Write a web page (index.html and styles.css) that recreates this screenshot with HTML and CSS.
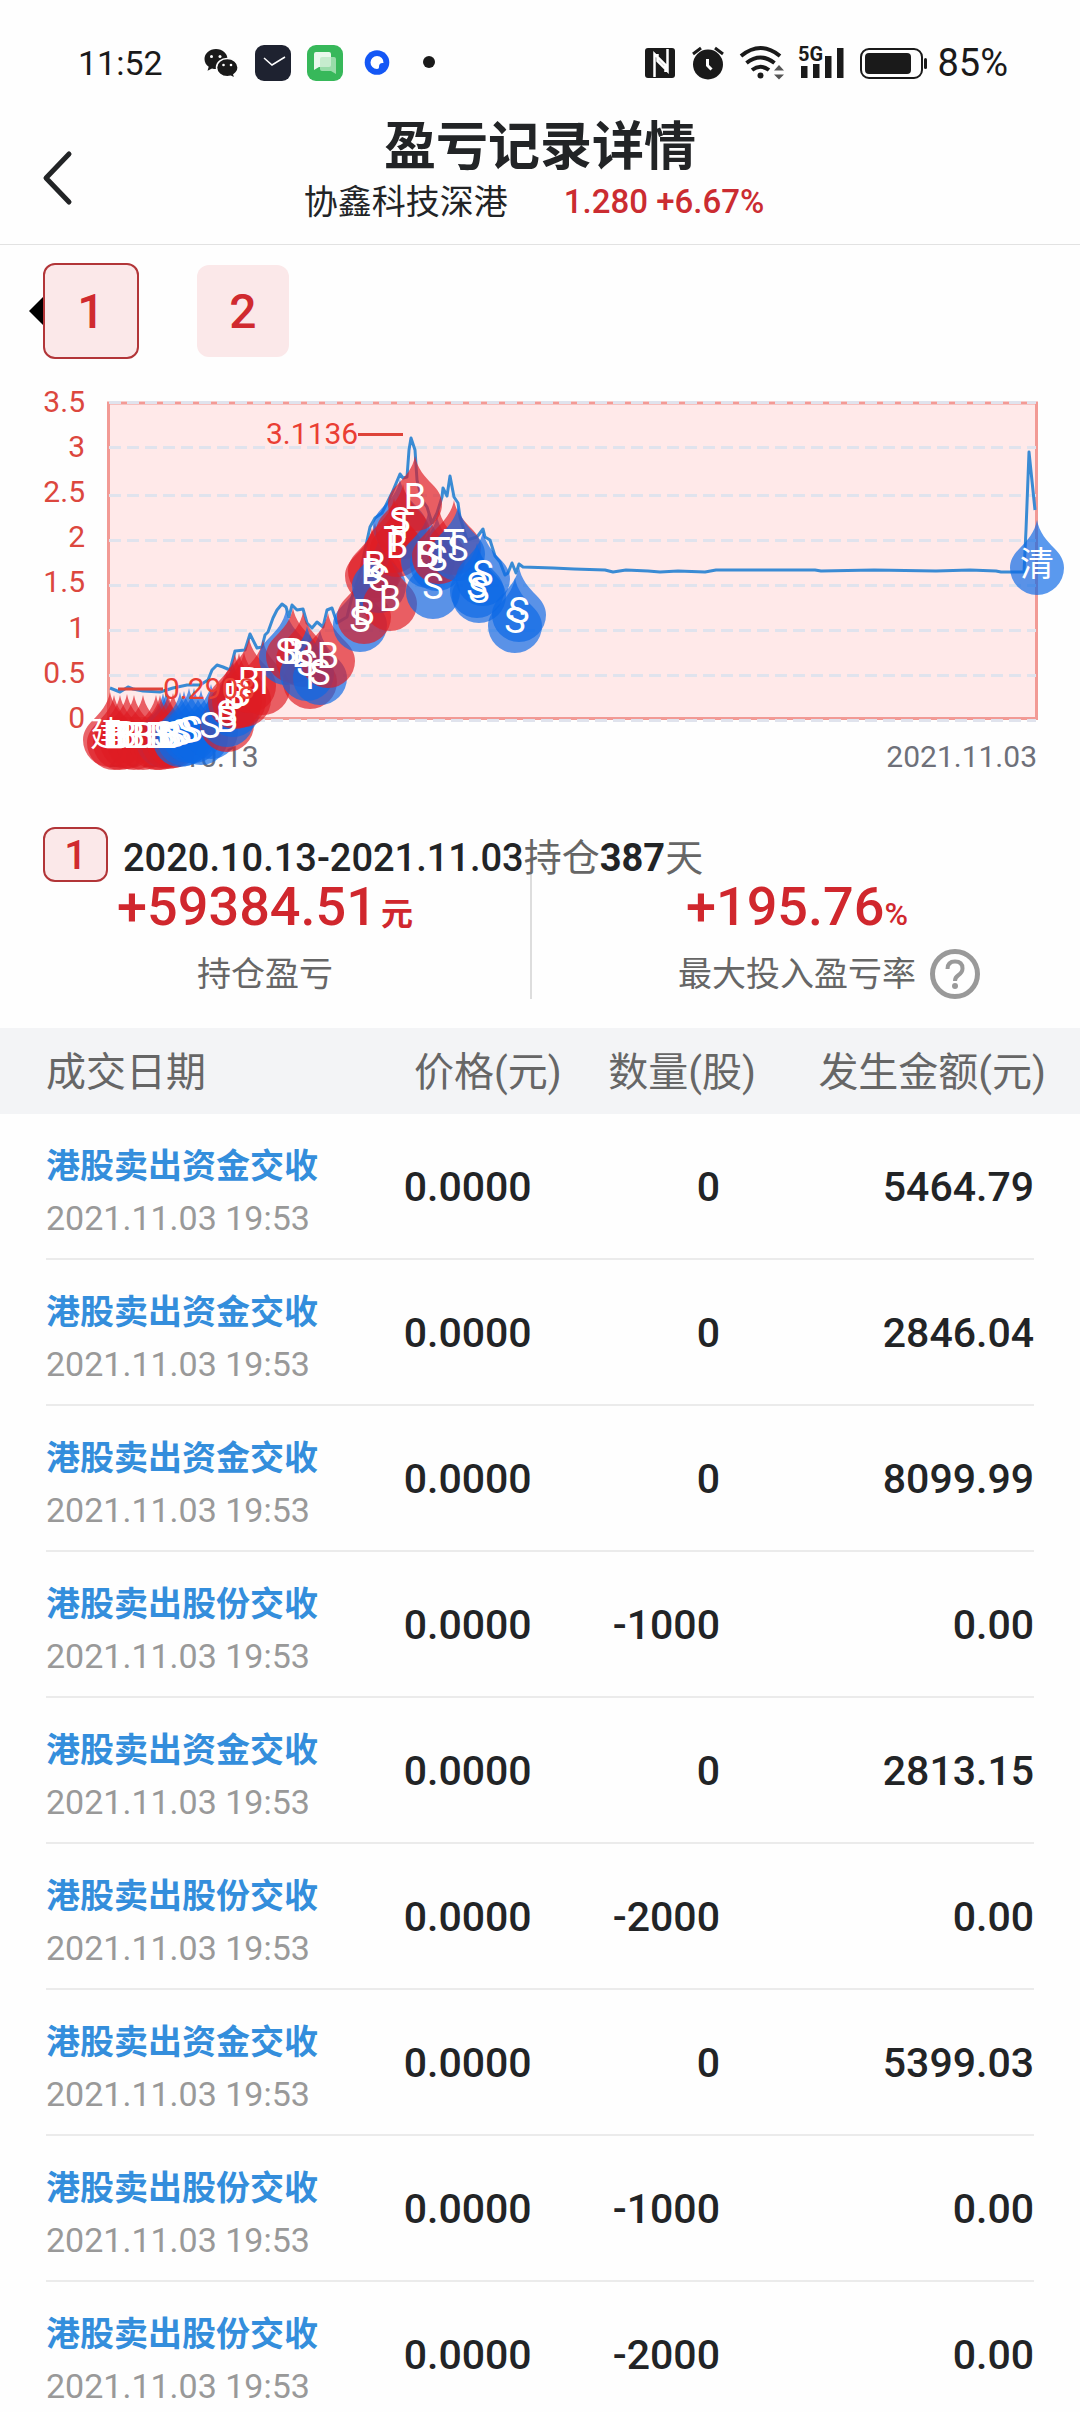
FILE: index.html
```html
<!DOCTYPE html>
<html lang="zh-CN">
<head>
<meta charset="utf-8">
<meta name="viewport" content="width=device-width, initial-scale=1">
<title>盈亏记录详情</title>
<link rel="stylesheet" href="styles.css">
</head>
<body>
<div class="app">
  <div class="status">
    <span class="clock">11:52</span>
    <svg class="status-apps" width="232" height="36" viewBox="204 45 232 36" aria-hidden="true">
      <g fill="#1a1a1a">
        <path d="M216 49c-6.500 0-11.500 4.500-11.500 10 0 3.200 1.600 6 4.200 7.800l-1.200 4 4.500-2.300c1.300.4 2.600.6 4 .6 6.500 0 11.500-4.600 11.500-10.100S222.500 49 216 49z"/>
        <path stroke="#fff" stroke-width="1.500" d="M227.300 58.500c-6 0-10.800 4-10.800 9s4.800 9.200 10.800 9.200c1.200 0 2.400-.2 3.500-.5l4.200 2.200-1.100-3.800c2.600-1.700 4.200-4.200 4.200-7.100 0-5-4.800-9-10.800-9z"/>
      </g>
      <g fill="#fff"><circle cx="211.500" cy="56.500" r="1.500"/><circle cx="220" cy="56.500" r="1.500"/><circle cx="223.500" cy="65" r="1.300"/><circle cx="231" cy="65" r="1.300"/></g>
      <rect x="255" y="45" width="36" height="36" rx="9" fill="#1e2230"/>
      <path d="M264 58l8 7 13-8" fill="none" stroke="#fff" stroke-width="1.500"/>
      <rect x="307" y="45" width="36" height="36" rx="9" fill="#37b85a"/>
      <path d="M316 52h13q2 0 2 2v11q0 2-2 2h-10l-5 3V54q0-2 2-2z" fill="#e9f8ec"/>
      <path d="M322 57h12q2 0 2 2v15l-5-3h-9q-2 0-2-2V59q0-2 2-2z" fill="#b9e8c4" fill-opacity=".75"/>
      <circle cx="377" cy="62.500" r="12.300" fill="#1457f5"/>
      <path d="M377 56a6.500 6.500 0 0 1 6.500 7c-3-.5-4.500 1-4.500 4 0 1-.5 2-2 2a6.500 6.500 0 0 1 0-13z" fill="#fff"/>
      <circle cx="429" cy="62" r="6" fill="#1a1a1a"/>
    </svg>
    <svg class="status-signal" width="284" height="36" viewBox="646 44 284 36" aria-hidden="true">
      <g fill="#1a1a1a">
        <rect x="646" y="47" width="30" height="30" rx="3"/>
        <path d="M655.500 76V53l11 11v7M668.500 48v22l-10-10v-7" fill="none" stroke="#fff" stroke-width="2.500"/>
        <circle cx="709" cy="63.500" r="15"/>
        <path d="M694 53l8-6M724 53l-8-6" stroke="#1a1a1a" stroke-width="3"/>
        <path d="M708.500 58v6.500l4 4" fill="none" stroke="#fff" stroke-width="3"/>
        <g fill="none" stroke="#1a1a1a" stroke-width="4"><path d="M742 55q19.500-16 39 0M747.500 62q14-11 28 0M753 69q8.500-6.500 17 0"/></g>
        <circle cx="761.500" cy="74.500" r="3"/>
        <path d="M775 69.500l5-5.500 5 5.500zM775 73.500h10l-5 5z" fill="#555"/>
        <path d="M802 65h6.500v12H802zM814 63h6.500v14H814zM826 55h6.500v22H826zM838 47h6.500v30H838z"/>
        <text x="799" y="60" class="net">5G</text>
        <rect x="862" y="48" width="61" height="29" rx="8" fill="none" stroke="#1a1a1a" stroke-width="2"/>
        <rect x="866" y="52" width="46" height="21" rx="4"/>
        <rect x="925" y="57" width="3" height="11" rx="1.500"/>
      </g>
    </svg>
    <span class="battery">85%</span>
  </div>

  <header class="header">
    <button class="back" type="button" aria-label="返回">
      <svg width="32" height="56" viewBox="0 0 32 56"><path d="M27 4L4 28l23 24" fill="none" stroke="#222426" stroke-width="5" stroke-linecap="round" stroke-linejoin="round"/></svg>
    </button>
    <h1>盈亏记录详情</h1>
    <p class="stock"><span>协鑫科技深港</span><span class="quote">1.280 +6.67%</span></p>
  </header>

  <nav class="tabs">
    <button class="tab tab-active" type="button">1</button>
    <button class="tab" type="button">2</button>
  </nav>

  <svg class="chart" viewBox="0 380 1080 400" role="img" aria-label="持仓走势">
    <defs>
      <path id="drop" d="M0 0C2 12 10 21 17 28C23 34 27 40 27 48A27 27 0 1 1-27 48C-27 40-23 34-17 28C-10 21-2 12 0 0Z"/>
    </defs>
    <rect x="108.500" y="403" width="928" height="316" fill="#ffe9e9"/>
    <path d="M108.500 720V403H1036.500V720" fill="none" stroke="#f29a95" stroke-width="3"/>
    <path d="M108 718.500H1037" stroke="#f29a95" stroke-width="3"/>
    <path class="grid" d="M109 402.500H1036M109 447.500H1036M109 495.500H1036M109 540.500H1036M109 585.500H1036M109 630.500H1036M109 675.500H1036M109 720.500H1036"/>
    <g class="axis-y">
      <text x="85" y="412">3.5</text><text x="85" y="457">3</text><text x="85" y="502">2.5</text><text x="85" y="547">2</text>
      <text x="85" y="592">1.5</text><text x="85" y="638">1</text><text x="85" y="683">0.5</text><text x="85" y="728">0</text>
    </g>
    <g class="axis-x"><text x="108" y="767">2020.10.13</text><text x="1037" y="767" text-anchor="end">2021.11.03</text></g>
    <path class="line" d="M110 688L120 692 128 687 133 689 143 691 160 692 173 688 187 685 200 685 208 680 212 670 217 665 223 667 230 670 235 651 245 650 250 634 257 648 262 647 265 635 268 632 273 618 277 610 282 604 286 607 289 617 292 605 297 610 303 609 307 623 312 628 317 622 323 627 327 610 332 608 337 623 347 617 352 597 360 573 370 527 375 518 382 513 392 493 400 474 403 478 407 477 409 450 411 438 415 450 417 480 422 500 427 507 432 523 437 513 442 497 443 488 447 496 450 476 454 497 458 503 460 517 467 540 477 537 483 529 485 537 490 540 495 556 500 562 505 575 508 573 512 563 516 573 519 564 523 567 553 568 574 569 605 570 613 572 626 570 648 571 660 572 678 571 705 572 716 570 815 570 821 571 874 570 936 571 970 570 996 571 1001 572 1024 572 1026 530 1029 452 1035 510"/>
    <g class="buy">
      <use href="#drop" x="110" y="692"/><use href="#drop" x="114" y="695"/><use href="#drop" x="120" y="695"/><use href="#drop" x="127" y="694"/><use href="#drop" x="134" y="695"/><use href="#drop" x="143" y="695"/>
    </g>
    <g class="sell"><use href="#drop" x="163" y="693"/><use href="#drop" x="166" y="692"/></g>
    <g class="buy"><use href="#drop" x="156" y="695"/><use href="#drop" x="160" y="695"/><use href="#drop" x="168" y="694"/><use href="#drop" x="173" y="693"/></g>
    <g class="sell"><use href="#drop" x="180" y="692"/><use href="#drop" x="184" y="691"/><use href="#drop" x="189" y="688"/><use href="#drop" x="194" y="688"/><use href="#drop" x="201" y="690"/><use href="#drop" x="211" y="684"/></g>
    <g class="buy"><use href="#drop" x="227" y="677"/></g>
    <g class="sell"><use href="#drop" x="227" y="672"/><use href="#drop" x="233" y="662"/></g>
    <g class="buy"><use href="#drop" x="235" y="654"/><use href="#drop" x="239" y="653"/><use href="#drop" x="244" y="652"/><use href="#drop" x="249" y="638"/><use href="#drop" x="263" y="640"/></g>
    <g class="sell"><use href="#drop" x="286" y="610"/></g>
    <g class="buy"><use href="#drop" x="293" y="608"/><use href="#drop" x="303" y="612"/><use href="#drop" x="310" y="634"/></g>
    <g class="sell"><use href="#drop" x="307" y="626"/><use href="#drop" x="320" y="630"/></g>
    <g class="buy"><use href="#drop" x="328" y="613"/></g>
    <g class="sell"><use href="#drop" x="360" y="577"/></g>
    <g class="buy"><use href="#drop" x="364" y="569"/><use href="#drop" x="372" y="528"/><use href="#drop" x="375" y="523"/></g>
    <g class="sell"><use href="#drop" x="379" y="538"/><use href="#drop" x="400" y="479"/></g>
    <g class="buy"><use href="#drop" x="390" y="556"/><use href="#drop" x="394" y="498"/><use href="#drop" x="397" y="502"/><use href="#drop" x="403" y="484"/></g>
    <g class="sell"><use href="#drop" x="433" y="544"/><use href="#drop" x="428" y="513"/><use href="#drop" x="437" y="516"/></g>
    <g class="buy"><use href="#drop" x="415" y="456"/><use href="#drop" x="439" y="509"/><use href="#drop" x="454" y="500"/></g>
    <g class="sell"><use href="#drop" x="458" y="506"/><use href="#drop" x="477" y="543"/><use href="#drop" x="479" y="548"/><use href="#drop" x="483" y="531"/><use href="#drop" x="519" y="567"/><use href="#drop" x="515" y="578"/><use href="#drop" x="1037" y="520"/></g>
    <path d="M118 689H163M358 434.500H403" stroke="#de4339" stroke-width="3"/>
    <g class="letters">
      <text x="107" y="746" class="han">建</text>
      <text x="114" y="748">B</text><text x="117" y="748">B</text><text x="120" y="748">B</text><text x="126" y="747">B</text><text x="134" y="748">B</text><text x="143" y="748">B</text><text x="156" y="748">B</text><text x="160" y="748">B</text><text x="164" y="747">S</text><text x="168" y="748">B</text><text x="171" y="748">B</text><text x="175" y="747">S</text><text x="181" y="745">S</text><text x="188" y="743">S</text><text x="192" y="742">S</text>
      <text x="210" y="738">S</text><text x="227" y="732">B</text><text x="227" y="726">S</text><text x="234" y="709">B</text><text x="240" y="706">B</text><text x="249" y="693">B</text><text x="264" y="694">T</text>
      <text x="286" y="664">S</text><text x="293" y="664">B</text><text x="303" y="667">B</text><text x="307" y="676">S</text><text x="310" y="689">T</text><text x="320" y="685">S</text><text x="328" y="668">B</text>
      <text x="360" y="632">S</text><text x="364" y="625">B</text><text x="390" y="611">B</text><text x="372" y="584">B</text><text x="375" y="577">B</text><text x="379" y="591">S</text><text x="394" y="552">T</text><text x="397" y="558">B</text><text x="400" y="533">S</text><text x="404" y="538">T</text><text x="415" y="509">B</text>
      <text x="426" y="567">B</text><text x="428" y="567">S</text><text x="433" y="599">S</text><text x="437" y="571">S</text><text x="440" y="563">T</text><text x="454" y="555">T</text><text x="458" y="561">S</text><text x="477" y="598">S</text><text x="479" y="603">S</text><text x="483" y="586">S</text><text x="515" y="633">S</text><text x="519" y="623">S</text>
      <text x="1037" y="576" class="han">清</text>
    </g>
    <g class="extreme"><text x="163" y="699">0.2908</text><text x="266" y="444">3.1136</text></g>
  </svg>

  <section class="summary">
    <div class="period">
      <span class="badge">1</span>
      <p><b>2020.10.13-2021.11.03</b>持仓<b class="days">387</b>天</p>
    </div>
    <div class="stats">
      <div class="stat">
        <p class="amount">+59384.51<small>元</small></p>
        <p class="label"><span>持仓盈亏</span></p>
      </div>
      <div class="stat stat-rate">
        <p class="amount">+195.76<small class="percent">%</small></p>
        <p class="label"><span>最大投入盈亏率</span>
          <button class="help" type="button" aria-label="说明">
            <svg width="50" height="50" viewBox="0 0 50 50"><circle cx="25" cy="25" r="22.500" fill="none" stroke="#999" stroke-width="5"/><path d="M17.500 20q0-7.500 7.500-7.500t7.500 7q0 4-4.500 7-3 2-3 5.500" fill="none" stroke="#999" stroke-width="4"/><circle cx="25" cy="37" r="3" fill="#999"/></svg>
          </button>
        </p>
      </div>
    </div>
  </section>

  <table class="trades">
    <colgroup><col class="c-date"><col class="c-price"><col class="c-qty"><col class="c-sum"></colgroup>
    <thead><tr><th>成交日期</th><th>价格(元)</th><th>数量(股)</th><th>发生金额(元)</th></tr></thead>
    <tbody>
      <tr><td><a href="#">港股卖出资金交收</a><time>2021.11.03 19:53</time></td><td>0.0000</td><td>0</td><td>5464.79</td></tr>
      <tr><td><a href="#">港股卖出资金交收</a><time>2021.11.03 19:53</time></td><td>0.0000</td><td>0</td><td>2846.04</td></tr>
      <tr><td><a href="#">港股卖出资金交收</a><time>2021.11.03 19:53</time></td><td>0.0000</td><td>0</td><td>8099.99</td></tr>
      <tr><td><a href="#">港股卖出股份交收</a><time>2021.11.03 19:53</time></td><td>0.0000</td><td>-1000</td><td>0.00</td></tr>
      <tr><td><a href="#">港股卖出资金交收</a><time>2021.11.03 19:53</time></td><td>0.0000</td><td>0</td><td>2813.15</td></tr>
      <tr><td><a href="#">港股卖出股份交收</a><time>2021.11.03 19:53</time></td><td>0.0000</td><td>-2000</td><td>0.00</td></tr>
      <tr><td><a href="#">港股卖出资金交收</a><time>2021.11.03 19:53</time></td><td>0.0000</td><td>0</td><td>5399.03</td></tr>
      <tr><td><a href="#">港股卖出股份交收</a><time>2021.11.03 19:53</time></td><td>0.0000</td><td>-1000</td><td>0.00</td></tr>
      <tr><td><a href="#">港股卖出股份交收</a><time>2021.11.03 19:53</time></td><td>0.0000</td><td>-2000</td><td>0.00</td></tr>
    </tbody>
  </table>
</div>
</body>
</html>
```

FILE: styles.css
```css
* { box-sizing: border-box; }
body, h1, p { margin: 0; }
body {
  background: #fefefe;
  color: #222426;
  font-family: Roboto, "Noto Sans CJK SC", sans-serif;
}
button {
  padding: 0;
  border: 0;
  background: none;
  font-family: inherit;
}
svg { display: block; overflow: visible; }

.app { height: 100vh; overflow: hidden; }

/* status bar */
.status {
  display: flex;
  align-items: center;
  height: 104px;
  padding: 22px 72px 0 78px;
  color: #1a1a1a;
  font-size: 38px;
  line-height: 40px;
}
.clock { width: 126px; font-size: 34px; }
.status-signal { margin-left: auto; margin-right: 8px; }
.net { font: 700 20px Roboto, sans-serif; }

/* title bar */
.header {
  position: relative;
  height: 141px;
  padding-top: 14px;
  border-bottom: 1px solid #e2e2e2;
  text-align: center;
}
.back { position: absolute; left: 42px; top: 46px; }
h1 { font-size: 52px; line-height: 60px; font-weight: 700; }
.stock {
  display: flex;
  justify-content: center;
  gap: 56px;
  padding-right: 12px;
  font-size: 34px;
  line-height: 48px;
}
.quote { color: #cb2c31; font-size: 33px; font-weight: 500; }

/* position tabs */
.tabs {
  display: flex;
  align-items: center;
  gap: 58px;
  padding: 18px 43px 21px;
}
.tab {
  position: relative;
  width: 92px;
  height: 92px;
  border-radius: 12px;
  background: #fbe8e9;
  color: #d02a2f;
  font-size: 48px;
  font-weight: 500;
}
.tab-active {
  width: 96px;
  height: 96px;
  border: 2px solid #b23538;
}
.tab-active::before {
  content: "";
  position: absolute;
  right: calc(100% + 2px);
  top: 50%;
  margin-top: -14px;
  border: 14px solid transparent;
  border-left-width: 0;
  border-right-color: #000;
}

/* chart */
.chart { width: 100%; height: auto; font-family: Roboto, sans-serif; font-size: 30px; }
.grid { stroke: #e0e3ed; stroke-width: 3; stroke-dasharray: 12 6; }
.axis-y { fill: #dc473e; text-anchor: end; }
.axis-x { fill: #6e7079; }
.extreme { fill: #ea3e34; }
.line { fill: none; stroke: #3a8bd4; stroke-width: 3; stroke-linejoin: round; }
.buy { fill: #de1c24; fill-opacity: .68; }
.sell { fill: #0c69e6; fill-opacity: .68; }
.letters { fill: #fff; font-size: 36px; text-anchor: middle; }
.han { font-family: "Noto Sans CJK SC", sans-serif; font-size: 34px; }

/* summary */
.summary { padding: 47px 0 29px; }
.period {
  position: relative;
  z-index: 1;
  display: flex;
  align-items: center;
  gap: 15px;
  height: 55px;
  padding-left: 43px;
  color: #666;
  font-size: 38px;
}
.period b { color: #222426; font-weight: 500; }
.period .days { font-weight: 700; }
.badge {
  width: 65px;
  height: 55px;
  border: 2px solid #b23538;
  border-radius: 12px;
  background: #fbe8e9;
  color: #d02a2f;
  font-size: 40px;
  line-height: 53px;
  font-weight: 500;
  text-align: center;
}
.stats { display: flex; margin-top: -10px; text-align: center; }
.stat { flex: 0 1 530px; padding-top: 10px; }
.stat-rate { flex: 1 1 0; border-left: 2px solid #ddd; padding-right: 18px; }
.amount {
  display: flex;
  justify-content: center;
  align-items: baseline;
  height: 48px;
  color: #d0272d;
  font-size: 54px;
  line-height: 50px;
  font-weight: 500;
}
.amount small { margin-left: 4px; font-size: 32px; font-weight: 700; }
.amount .percent { margin-left: 0; font-weight: 500; }
.label {
  display: flex;
  justify-content: center;
  align-items: center;
  gap: 14px;
  height: 50px;
  margin-top: 19px;
  color: #666;
  font-size: 34px;
}
.label span { padding-bottom: 6px; }
.stat-rate .label { padding-left: 64px; }

/* trades */
.trades { width: 100%; border-collapse: collapse; table-layout: fixed; }
.c-date { width: 36%; }
.c-price { width: 16%; }
.c-qty { width: 18%; }
.c-sum { width: 30%; }
.trades th {
  height: 86px;
  padding: 0 0 4px;
  background: #f3f4f6;
  color: #666;
  font-size: 40px;
  font-weight: 400;
  text-align: right;
  white-space: nowrap;
}
.trades th:first-child { padding-left: 46px; text-align: left; }
.trades th:last-child { padding-right: 34px; }
.trades tbody tr {
  background: linear-gradient(#ebebeb, #ebebeb) center bottom / calc(100% - 92px) 2px no-repeat;
}
.trades td {
  height: 146px;
  padding: 0 30px 0 0;
  font-size: 41px;
  font-weight: 500;
  text-align: right;
}
.trades td:first-child { padding: 6px 0 0 46px; text-align: left; }
.trades td:nth-child(3) { padding-right: 36px; }
.trades td:last-child { padding-right: 46px; }
.trades a {
  display: block;
  color: #348edc;
  font-size: 34px;
  line-height: 56px;
  font-weight: 700;
  text-decoration: none;
}
.trades time {
  display: block;
  color: #999;
  font-size: 34px;
  line-height: 48px;
  font-weight: 400;
}
```
